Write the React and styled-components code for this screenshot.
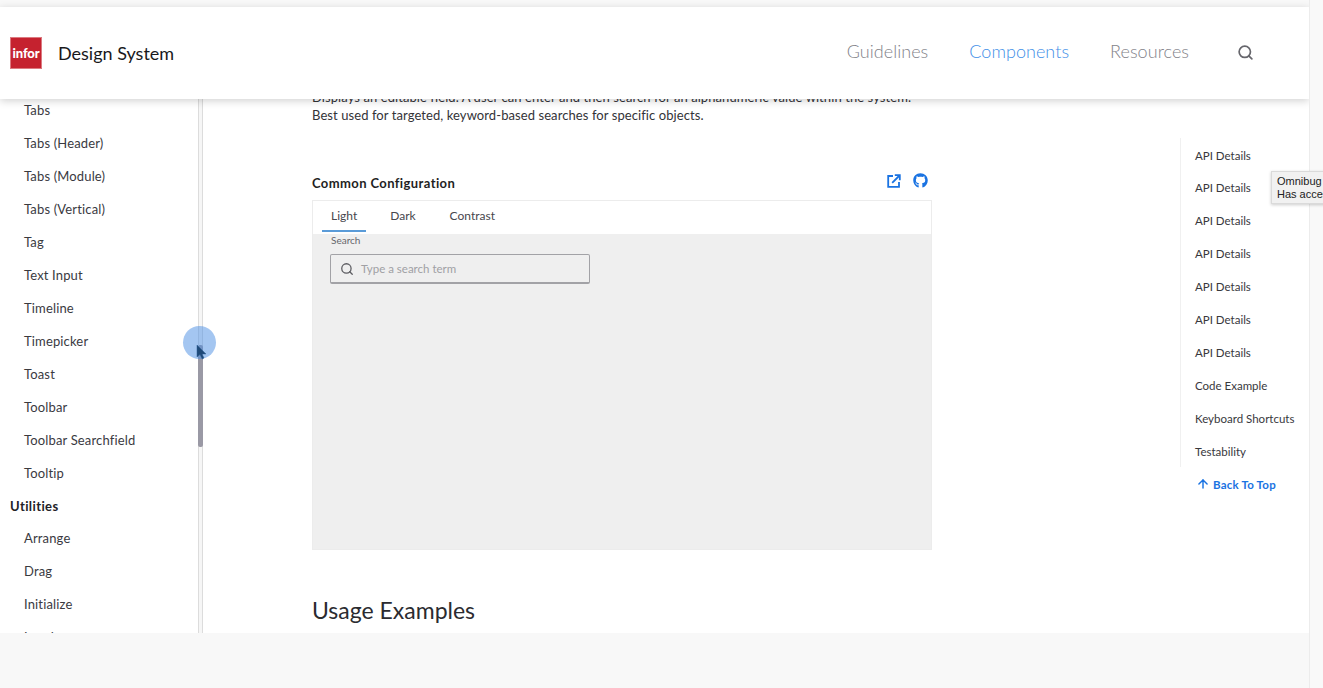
import React from "react";
import styled, { createGlobalStyle } from "styled-components";
import { FaGithub } from "react-icons/fa";
import { ArrowUp, Search } from "lucide-react";

const Global = createGlobalStyle`
  html, body { margin: 0; height: 100%; overflow: hidden; background: #f8f8f8; }
  * { box-sizing: border-box; }
  body { font-family: Lato, "Noto Sans", sans-serif; color: #2f2f33; }
`;
const Page = styled.div`
  position: relative; width: 1323px; height: 688px; display: flex; overflow: hidden; background: #f8f8f8;
`;
const Column = styled.div`
  width: 1309px; height: 633px; display: flex; flex-direction: column; padding-top: 7px; overflow: hidden;
`;
const ScrollStrip = styled.div`
  width: 14px; height: 688px; background: #f9f9f9; border-left: 1px solid #ececec;
`;
const Header = styled.header`
  position: relative; z-index: 2; flex: none; height: 92px; background: #fff; display: flex; align-items: center;
  padding: 0 55px 0 10px; box-shadow: 0 2px 8px rgba(0,0,0,.18);
`;
const Logo = styled.div`
  width: 32px; height: 32px; background: #c5222f; border: 1px solid #dc7a80; color: #fff; font-weight: 900; font-size: 13px;
  display: flex; align-items: center; justify-content: center; margin-top: -1px; letter-spacing: -.1px;
`;
const Brand = styled.div`
  margin-left: 16px; font-size: 18px; color: #19191c; margin-top: -1px; flex: 1;
`;
const Nav = styled.nav`
  display: flex; align-items: center; gap: 41px; margin-top: -4px;
`;
const NavLink = styled.a`
  font-size: 18px; font-weight: 300; letter-spacing: .04px; color: ${p => (p.$active ? "#3f8fe8" : "#828289")};
`;
const SearchButton = styled.span`
  display: flex; color: #66666c; margin: 2px 0 0 7px;
`;
const Body = styled.div`
  flex: 1; min-height: 0; display: flex; overflow: hidden; background: #fff;
`;
const Sidebar = styled.aside`
  width: 198px; flex: none; padding: 0 0 0 10px; margin-top: -6px; height: 540px;
`;
const SideItem = styled.div`
  height: 33px; display: flex; align-items: center; padding-left: 14px; font-size: 13px; letter-spacing: .15px; color: #3a3a3f;
`;
const SideHeading = styled.div`
  height: 33px; margin-bottom: -1px; display: flex; align-items: center; font-size: 13px; font-weight: 700; letter-spacing: .4px; color: #222226;
`;
const Gutter = styled.div`
  width: 5px; flex: none; border-left: 1px solid #dcdcdc; border-right: 1px solid #dcdcdc; background: #f6f6f6;
`;
const Main = styled.main`
  flex: 1; display: flex; padding-left: 109px; min-width: 0;
`;
const Content = styled.div`
  width: 620px; flex: none; margin-top: -11px;
`;
const Intro = styled.p`
  margin: 0; font-size: 13px; line-height: 18px; letter-spacing: .08px; color: #333338; white-space: nowrap;
`;
const ExampleHead = styled.div`
  margin-top: 46px; height: 30px; padding-bottom: 9px; display: flex; align-items: center; justify-content: space-between; padding-right: 4px;
`;
const ExampleTitle = styled.h3`
  margin: 4px 0 0; font-size: 13px; font-weight: 700; letter-spacing: .4px; color: #1f1f23;
`;
const IconLinks = styled.div`
  display: flex; align-items: center; gap: 12px; color: #1a73e2;
`;
const Card = styled.div`
  height: 350px; border: 1px solid #ececec; display: flex; flex-direction: column;
`;
const TabBar = styled.div`
  height: 33px; flex: none; display: flex; padding-left: 9px; background: #fff;
`;
const Tab = styled.div`
  height: 31px; padding: 0 ${p => p.$pad || 9}px; margin-right: ${p => p.$gap || 0}px; display: flex; align-items: center; font-size: 12px; color: #47474d;
  border-bottom: 2px solid ${p => (p.$active ? "#5a9bd8" : "transparent")};
`;
const Demo = styled.div`
  flex: 1; background: #efefef; padding: 0 17px;
`;
const FieldLabel = styled.div`
  font-size: 10px; line-height: 12px; color: #66666c; margin: 0 0 8px 1px;
`;
const Field = styled.div`
  width: 260px; height: 30px; border: 1px solid #a2a2a6; border-bottom-width: 2px; border-radius: 2px; display: flex; align-items: center; padding-left: 9px; gap: 7px;
  color: #5d5d62; font-size: 11.5px;
`;
const Placeholder = styled.span`
  color: #a0a0a4;
`;
const SectionTitle = styled.h2`
  margin: 46px 0 0; font-size: 23px; font-weight: 400; color: #2b2b30; line-height: 28px; white-space: nowrap;
`;
const Rail = styled.div`
  margin-left: 248px; margin-top: 39px; width: 129px; flex: none;
`;
const RailList = styled.div`
  border-left: 1px solid #f0f0f0; height: 329px; padding-top: .4px;
`;
const RailItem = styled.div`
  height: 33px; display: flex; align-items: center; padding-left: 14px; font-size: 11.5px; color: #38383d; white-space: nowrap;
  &:first-child { padding-top: 2px; }
`;
const BackToTop = styled.div`
  margin: 10px 0 0 16px; display: flex; align-items: center; gap: 3px; color: #1a73e2; font-size: 11.5px; font-weight: 700; letter-spacing: .2px;
`;
const Tooltip = styled.div`
  position: absolute; left: 1271px; top: 171px; width: 70px; height: 33px; background: #f1f1f1; border: 1px solid #dadada; box-shadow: 0 1px 3px rgba(0,0,0,.2);
  font-family: "Liberation Sans", sans-serif; font-size: 11px; line-height: 13px; padding: 3px 5px; color: #222; white-space: nowrap; z-index: 4;
`;
const Thumb = styled.div`
  position: absolute; left: 198px; top: 345px; width: 5px; height: 102px; background: #9a99a5; border-radius: 2px; z-index: 3;
`;
const Touch = styled.div`
  position: absolute; left: 183px; top: 326px; width: 33px; height: 33px; border-radius: 50%; background: rgba(74,141,228,.5); z-index: 3;
`;
const Cursor = styled.svg`
  position: absolute; left: 196px; top: 344px; z-index: 4;
`;

const top = ["Tabs", "Tabs (Header)", "Tabs (Module)", "Tabs (Vertical)", "Tag", "Text Input", "Timeline", "Timepicker", "Toast", "Toolbar", "Toolbar Searchfield", "Tooltip"];
const utilities = ["Arrange", "Drag", "Initialize", "Locale"];
const rail = ["API Details", "API Details", "API Details", "API Details", "API Details", "API Details", "API Details", "Code Example", "Keyboard Shortcuts", "Testability"];

function ExternalIcon() {
  return (
    <svg width="14" height="14" viewBox="0 0 14 14" fill="none" stroke="currentColor" strokeWidth="1.8">
      <path d="M6 2H1.2v10.8H12V8" />
      <path d="M5.2 8.8 12 2" />
      <path d="M7.8 1.2h5v5" />
    </svg>
  );
}

export default function App() {
  return (
    <Page>
      <Global />
      <Column>
        <Header>
          <Logo>infor</Logo>
          <Brand>Design System</Brand>
          <Nav>
            <NavLink>Guidelines</NavLink>
            <NavLink $active>Components</NavLink>
            <NavLink>Resources</NavLink>
            <SearchButton><Search size={17} strokeWidth={2.4} /></SearchButton>
          </Nav>
        </Header>
        <Body>
          <Sidebar>
            {top.map(t => <SideItem key={t}>{t}</SideItem>)}
            <SideHeading>Utilities</SideHeading>
            {utilities.map(t => <SideItem key={t}>{t}</SideItem>)}
          </Sidebar>
          <Gutter />
          <Main>
            <Content>
              <Intro>Displays an editable field. A user can enter and then search for an alphanumeric value within the system.</Intro>
              <Intro>Best used for targeted, keyword-based searches for specific objects.</Intro>
              <ExampleHead>
                <ExampleTitle>Common Configuration</ExampleTitle>
                <IconLinks>
                  <ExternalIcon />
                  <FaGithub size={15} />
                </IconLinks>
              </ExampleHead>
              <Card>
                <TabBar>
                  <Tab $active $gap={7}>Light</Tab>
                  <Tab $pad={17}>Dark</Tab>
                  <Tab $pad={17}>Contrast</Tab>
                </TabBar>
                <Demo>
                  <FieldLabel>Search</FieldLabel>
                  <Field>
                    <Search size={14} strokeWidth={2.2} />
                    <Placeholder>Type a search term</Placeholder>
                  </Field>
                </Demo>
              </Card>
              <SectionTitle>Usage Examples</SectionTitle>
            </Content>
            <Rail>
              <RailList>
                {rail.map((t, i) => <RailItem key={i}>{t}</RailItem>)}
              </RailList>
              <BackToTop><ArrowUp size={14} strokeWidth={2.5} />Back To Top</BackToTop>
            </Rail>
          </Main>
        </Body>
      </Column>
      <ScrollStrip />
      <Thumb />
      <Touch />
      <Cursor width="12" height="17" viewBox="0 0 12 17">
        <path d="M1 1 L1 13 L4 10.5 L6.2 15 L8 14 L6 10 L10 10 Z" fill="#1f4a78" stroke="#2c5f94" strokeWidth=".5" />
      </Cursor>
      <Tooltip>Omnibug<br />Has access to this site</Tooltip>
    </Page>
  );
}
